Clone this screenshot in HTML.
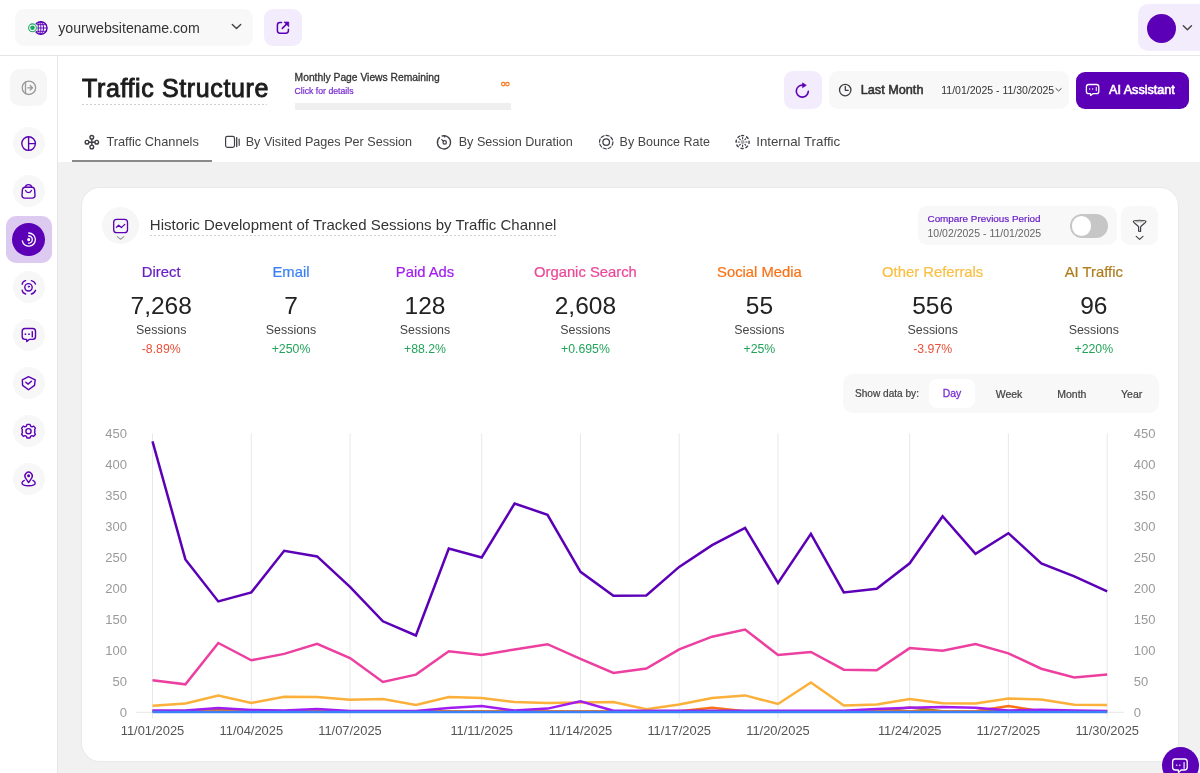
<!DOCTYPE html>
<html><head><meta charset="utf-8">
<style>
*{box-sizing:border-box;margin:0;padding:0}
html,body{width:1200px;height:773px;overflow:hidden;background:#fff}
body{position:relative;will-change:transform;font-family:"Liberation Sans",sans-serif;color:#333}
.a{position:absolute}
.t{position:absolute;line-height:1;white-space:nowrap}
.b{font-weight:bold}
.c{transform:translateX(-50%)}
.m{-webkit-text-stroke:0.22px currentColor}
</style></head><body>

<!-- top header -->
<div class="a" style="left:0;top:55px;width:1200px;height:1px;background:#e6e6e6"></div>
<div class="a" style="left:15px;top:9px;width:238px;height:37px;border-radius:9px;background:#f8f8f8"></div>
<div class="a" style="left:264px;top:9px;width:38px;height:37px;border-radius:9px;background:#f3ecfc"></div>
<div class="a" style="left:1138px;top:4px;width:70px;height:47px;border-radius:10px;background:#f3ecfc"></div>
<div class="a" style="left:1147px;top:14px;width:29px;height:29px;border-radius:50%;background:#5b00b6"></div>
<div class="t" style="left:58.3px;top:20.5px;font-size:14.15px;color:#333">yourwebsitename.com</div>

<!-- sidebar -->
<div class="a" style="left:57px;top:56px;width:1px;height:717px;background:#e6e6e6"></div>
<div class="a" style="left:10px;top:69px;width:37px;height:37px;border-radius:10px;background:#f6f6f6"></div>
<div class="a" style="left:12.5px;top:127px;width:32px;height:32px;border-radius:50%;background:#f7f7f7"></div>
<div class="a" style="left:12.5px;top:175px;width:32px;height:32px;border-radius:50%;background:#f7f7f7"></div>
<div class="a" style="left:6px;top:216px;width:46px;height:47px;border-radius:10px;background:#dccaf1"></div>
<div class="a" style="left:12px;top:223px;width:33px;height:33px;border-radius:50%;background:#5b00b6"></div>
<div class="a" style="left:12.5px;top:271px;width:32px;height:32px;border-radius:50%;background:#f7f7f7"></div>
<div class="a" style="left:12.5px;top:319px;width:32px;height:32px;border-radius:50%;background:#f7f7f7"></div>
<div class="a" style="left:12.5px;top:367px;width:32px;height:32px;border-radius:50%;background:#f7f7f7"></div>
<div class="a" style="left:12.5px;top:415px;width:32px;height:32px;border-radius:50%;background:#f7f7f7"></div>
<div class="a" style="left:12.5px;top:463px;width:32px;height:32px;border-radius:50%;background:#f7f7f7"></div>

<!-- page header -->
<div class="t" style="left:82px;top:76.4px;font-size:25px;letter-spacing:0.62px;color:#1c1c1c;-webkit-text-stroke:0.9px #1c1c1c">Traffic Structure</div>
<div class="a" style="left:82px;top:104px;width:185px;height:1px;background:repeating-linear-gradient(90deg,#cfcfcf 0 2px,transparent 2px 4px)"></div>
<div class="t" style="left:294.6px;top:72.9px;font-size:10.3px;color:#333;-webkit-text-stroke:0.3px #333">Monthly Page Views Remaining</div>
<div class="t m" style="left:294.6px;top:86.7px;font-size:8.7px;color:#7a2ed0">Click for details</div>
<div class="a" style="left:294.6px;top:103px;width:216px;height:6.5px;background:#efefef"></div>

<div class="a" style="left:784px;top:71px;width:38px;height:38px;border-radius:9px;background:#f3ecfc"></div>
<div class="a" style="left:828.5px;top:71px;width:240.5px;height:38px;border-radius:9px;background:#f8f8f8"></div>
<div class="t" style="left:860.7px;top:83.5px;font-size:12.7px;color:#333;-webkit-text-stroke:0.55px #333">Last Month</div>
<div class="t" style="left:941.3px;top:84.6px;font-size:10.5px;color:#333">11/01/2025 - 11/30/2025</div>
<div class="a" style="left:1076px;top:71.5px;width:112.5px;height:37.5px;border-radius:9px;background:#5b00b6"></div>
<div class="t" style="left:1109px;top:83.5px;font-size:12.6px;color:#fff;-webkit-text-stroke:0.6px #fff">AI Assistant</div>

<!-- tabs -->
<div class="t" style="left:106.4px;top:136.4px;font-size:12.8px;color:#444">Traffic Channels</div>
<div class="t" style="left:245.7px;top:136.4px;font-size:12.6px;color:#444">By Visited Pages Per Session</div>
<div class="t" style="left:458.7px;top:136.4px;font-size:12.6px;color:#444">By Session Duration</div>
<div class="t" style="left:619.6px;top:136.4px;font-size:12.5px;color:#444">By Bounce Rate</div>
<div class="t" style="left:756.2px;top:135px;font-size:13.3px;color:#444">Internal Traffic</div>
<div class="a" style="left:72px;top:159.5px;width:140px;height:2px;background:#8a8a8a"></div>

<!-- gray content -->
<div class="a" style="left:58px;top:161.5px;width:1142px;height:612px;background:#f1f1f1"></div>
<div class="a" style="left:82px;top:187.5px;width:1096px;height:573px;border-radius:18px;background:#fff;box-shadow:0 0 0 1px #e9e9e9"></div>

<!-- card header -->
<div class="a" style="left:102px;top:207px;width:37px;height:37px;border-radius:50%;background:#f6f6f6"></div>
<div class="t" style="left:149.8px;top:217px;font-size:15px;color:#333">Historic Development of Tracked Sessions by Traffic Channel</div>
<div class="a" style="left:149.8px;top:235px;width:406px;height:1px;background:repeating-linear-gradient(90deg,#cfcfcf 0 2px,transparent 2px 4px)"></div>

<div class="a" style="left:917.5px;top:206px;width:199.5px;height:38.5px;border-radius:9px;background:#f8f8f8"></div>
<div class="t" style="left:927.5px;top:213.6px;font-size:9.9px;color:#6d22c9;-webkit-text-stroke:0.2px #6d22c9">Compare Previous Period</div>
<div class="t" style="left:927.5px;top:227.6px;font-size:10.5px;color:#666">10/02/2025 - 11/01/2025</div>
<div class="a" style="left:1069.5px;top:214px;width:38px;height:23.5px;border-radius:12px;background:#c6c6c6"></div>
<div class="a" style="left:1071.5px;top:216px;width:19.5px;height:19.5px;border-radius:50%;background:#fff"></div>
<div class="a" style="left:1121px;top:206px;width:37px;height:38.5px;border-radius:9px;background:#f8f8f8"></div>

<!-- stats -->
<div class="t c m" style="left:161.2px;top:265.3px;font-size:14.8px;color:#6a1ec4">Direct</div>
<div class="t c" style="left:161.2px;top:293.7px;font-size:24.5px;color:#222">7,268</div>
<div class="t c" style="left:161.2px;top:323.6px;font-size:12.4px;color:#444">Sessions</div>
<div class="t c" style="left:161.2px;top:342.6px;font-size:12.3px;color:#e8503a">-8.89%</div>
<div class="t c m" style="left:291px;top:265.3px;font-size:14.8px;color:#3b82f6">Email</div>
<div class="t c" style="left:291px;top:293.7px;font-size:24.5px;color:#222">7</div>
<div class="t c" style="left:291px;top:323.6px;font-size:12.4px;color:#444">Sessions</div>
<div class="t c" style="left:291px;top:342.6px;font-size:12.3px;color:#22a35a">+250%</div>
<div class="t c m" style="left:425px;top:265.3px;font-size:14.8px;color:#a21cf0">Paid Ads</div>
<div class="t c" style="left:425px;top:293.7px;font-size:24.5px;color:#222">128</div>
<div class="t c" style="left:425px;top:323.6px;font-size:12.4px;color:#444">Sessions</div>
<div class="t c" style="left:425px;top:342.6px;font-size:12.3px;color:#22a35a">+88.2%</div>
<div class="t c m" style="left:585.4px;top:265.3px;font-size:14.8px;color:#ec4899">Organic Search</div>
<div class="t c" style="left:585.4px;top:293.7px;font-size:24.5px;color:#222">2,608</div>
<div class="t c" style="left:585.4px;top:323.6px;font-size:12.4px;color:#444">Sessions</div>
<div class="t c" style="left:585.4px;top:342.6px;font-size:12.3px;color:#22a35a">+0.695%</div>
<div class="t c m" style="left:759.4px;top:265.3px;font-size:14.8px;color:#f97316">Social Media</div>
<div class="t c" style="left:759.4px;top:293.7px;font-size:24.5px;color:#222">55</div>
<div class="t c" style="left:759.4px;top:323.6px;font-size:12.4px;color:#444">Sessions</div>
<div class="t c" style="left:759.4px;top:342.6px;font-size:12.3px;color:#22a35a">+25%</div>
<div class="t c m" style="left:932.7px;top:265.3px;font-size:14.8px;color:#fbbf44">Other Referrals</div>
<div class="t c" style="left:932.7px;top:293.7px;font-size:24.5px;color:#222">556</div>
<div class="t c" style="left:932.7px;top:323.6px;font-size:12.4px;color:#444">Sessions</div>
<div class="t c" style="left:932.7px;top:342.6px;font-size:12.3px;color:#e8503a">-3.97%</div>
<div class="t c m" style="left:1093.8px;top:265.3px;font-size:14.8px;color:#b07d1e">AI Traffic</div>
<div class="t c" style="left:1093.8px;top:293.7px;font-size:24.5px;color:#222">96</div>
<div class="t c" style="left:1093.8px;top:323.6px;font-size:12.4px;color:#444">Sessions</div>
<div class="t c" style="left:1093.8px;top:342.6px;font-size:12.3px;color:#22a35a">+220%</div>

<!-- show data by -->
<div class="a" style="left:842.7px;top:374.2px;width:316px;height:38.6px;border-radius:10px;background:#f8f8f8"></div>
<div class="a" style="left:929px;top:378.8px;width:46px;height:29.4px;border-radius:8px;background:#fff"></div>
<div class="t m" style="left:855px;top:388.9px;font-size:10.1px;color:#444">Show data by:</div>
<div class="t c" style="left:952px;top:389.2px;font-size:10.4px;color:#7a2ed0;-webkit-text-stroke:0.3px #7a2ed0">Day</div>
<div class="t c m" style="left:1009px;top:388.6px;font-size:10.5px;color:#444">Week</div>
<div class="t c m" style="left:1071.8px;top:388.6px;font-size:10.5px;color:#444">Month</div>
<div class="t c m" style="left:1131.7px;top:388.6px;font-size:10.5px;color:#444">Year</div>

<!-- chart -->
<svg class="a" style="left:0;top:0;font-family:'Liberation Sans',sans-serif" width="1200" height="773" viewBox="0 0 1200 773">
<line x1="152.5" y1="433.5" x2="152.5" y2="718.5" stroke="#e8e8e8" stroke-width="1"/>
<line x1="251.3" y1="433.5" x2="251.3" y2="718.5" stroke="#e8e8e8" stroke-width="1"/>
<line x1="350.0" y1="433.5" x2="350.0" y2="718.5" stroke="#e8e8e8" stroke-width="1"/>
<line x1="481.7" y1="433.5" x2="481.7" y2="718.5" stroke="#e8e8e8" stroke-width="1"/>
<line x1="580.5" y1="433.5" x2="580.5" y2="718.5" stroke="#e8e8e8" stroke-width="1"/>
<line x1="679.2" y1="433.5" x2="679.2" y2="718.5" stroke="#e8e8e8" stroke-width="1"/>
<line x1="778.0" y1="433.5" x2="778.0" y2="718.5" stroke="#e8e8e8" stroke-width="1"/>
<line x1="909.7" y1="433.5" x2="909.7" y2="718.5" stroke="#e8e8e8" stroke-width="1"/>
<line x1="1008.4" y1="433.5" x2="1008.4" y2="718.5" stroke="#e8e8e8" stroke-width="1"/>
<line x1="1107.2" y1="433.5" x2="1107.2" y2="718.5" stroke="#e8e8e8" stroke-width="1"/>
<line x1="136" y1="712.3" x2="1124" y2="712.3" stroke="#e6e6e6" stroke-width="1"/>
<polyline points="152.5,441.3 185.4,559.4 218.3,601.4 251.3,592.4 284.2,550.8 317.1,556.4 350.0,586.8 382.9,621.3 415.9,635.5 448.8,548.5 481.7,557.5 514.6,503.5 547.5,514.8 580.5,571.8 613.4,595.8 646.3,595.4 679.2,566.9 712.1,545.2 745.1,527.9 778.0,583.0 810.9,533.9 843.8,592.4 876.7,588.8 909.7,563.3 942.6,516.3 975.5,553.9 1008.4,533.2 1041.3,563.3 1074.3,576.4 1107.2,591.4" fill="none" stroke="#5b00b6" stroke-width="2.5" stroke-linejoin="miter"/>
<polyline points="152.5,680.2 185.4,684.3 218.3,643.0 251.3,660.3 284.2,653.9 317.1,643.8 350.0,658.0 382.9,682.0 415.9,674.6 448.8,651.3 481.7,655.0 514.6,649.4 547.5,644.2 580.5,658.8 613.4,673.0 646.3,668.6 679.2,649.4 712.1,636.7 745.1,629.5 778.0,655.0 810.9,652.0 843.8,669.7 876.7,670.2 909.7,648.1 942.6,650.7 975.5,644.0 1008.4,653.4 1041.3,668.7 1074.3,677.4 1107.2,674.4" fill="none" stroke="#ec3fa0" stroke-width="2.5" stroke-linejoin="miter"/>
<polyline points="152.5,705.7 185.4,703.4 218.3,695.6 251.3,703.0 284.2,696.7 317.1,697.0 350.0,699.7 382.9,699.0 415.9,705.0 448.8,697.0 481.7,698.0 514.6,702.0 547.5,703.0 580.5,702.6 613.4,702.0 646.3,709.3 679.2,704.6 712.1,698.0 745.1,695.4 778.0,704.0 810.9,682.4 843.8,705.4 876.7,704.4 909.7,699.1 942.6,703.3 975.5,703.6 1008.4,698.4 1041.3,699.5 1074.3,704.8 1107.2,705.1" fill="none" stroke="#fbb03b" stroke-width="2.5" stroke-linejoin="miter"/>
<polyline points="152.5,711.2 185.4,711.2 218.3,709.0 251.3,711.2 284.2,711.2 317.1,711.2 350.0,711.2 382.9,711.2 415.9,711.2 448.8,711.2 481.7,711.2 514.6,711.2 547.5,711.2 580.5,711.2 613.4,711.2 646.3,711.2 679.2,711.2 712.1,711.2 745.1,711.2 778.0,711.2 810.9,711.2 843.8,711.2 876.7,711.2 909.7,707.5 942.6,711.2 975.5,711.2 1008.4,711.2 1041.3,711.2 1074.3,711.2 1107.2,711.2" fill="none" stroke="#b07d1e" stroke-width="2.5" stroke-linejoin="miter"/>
<polyline points="152.5,711.2 185.4,711.2 218.3,711.2 251.3,711.2 284.2,711.2 317.1,711.2 350.0,711.2 382.9,711.2 415.9,711.2 448.8,711.2 481.7,711.2 514.6,711.2 547.5,711.2 580.5,711.2 613.4,711.2 646.3,711.2 679.2,711.2 712.1,707.7 745.1,711.2 778.0,711.2 810.9,711.2 843.8,711.2 876.7,711.2 909.7,711.2 942.6,711.2 975.5,711.2 1008.4,706.0 1041.3,711.2 1074.3,711.2 1107.2,711.2" fill="none" stroke="#f97316" stroke-width="2.5" stroke-linejoin="miter"/>
<polyline points="152.5,710.5 185.4,710.6 218.3,708.0 251.3,710.0 284.2,710.4 317.1,709.0 350.0,710.9 382.9,710.9 415.9,710.9 448.8,708.0 481.7,706.0 514.6,710.6 547.5,708.6 580.5,701.4 613.4,710.8 646.3,710.8 679.2,710.8 712.1,710.8 745.1,710.8 778.0,710.8 810.9,710.8 843.8,710.8 876.7,709.0 909.7,707.7 942.6,707.0 975.5,707.7 1008.4,710.4 1041.3,709.7 1074.3,710.6 1107.2,710.9" fill="none" stroke="#a21cf0" stroke-width="2.5" stroke-linejoin="miter"/>
<polyline points="152.5,711.9 185.4,711.9 218.3,711.9 251.3,711.9 284.2,711.9 317.1,711.9 350.0,711.9 382.9,711.9 415.9,711.9 448.8,711.9 481.7,711.9 514.6,711.9 547.5,711.9 580.5,711.9 613.4,711.9 646.3,711.9 679.2,711.9 712.1,711.9 745.1,711.9 778.0,711.9 810.9,711.9 843.8,711.9 876.7,711.9 909.7,711.9 942.6,711.9 975.5,711.9 1008.4,711.9 1041.3,711.9 1074.3,711.9 1107.2,711.9" fill="none" stroke="#3b82f6" stroke-width="2.5" stroke-linejoin="miter"/>
<text x="127" y="717.0" text-anchor="end" font-size="13" fill="#9a9a9a">0</text>
<text x="1133.7" y="717.0" font-size="13" fill="#9a9a9a">0</text>
<text x="127" y="686.0" text-anchor="end" font-size="13" fill="#9a9a9a">50</text>
<text x="1133.7" y="686.0" font-size="13" fill="#9a9a9a">50</text>
<text x="127" y="655.1" text-anchor="end" font-size="13" fill="#9a9a9a">100</text>
<text x="1133.7" y="655.1" font-size="13" fill="#9a9a9a">100</text>
<text x="127" y="624.1" text-anchor="end" font-size="13" fill="#9a9a9a">150</text>
<text x="1133.7" y="624.1" font-size="13" fill="#9a9a9a">150</text>
<text x="127" y="593.2" text-anchor="end" font-size="13" fill="#9a9a9a">200</text>
<text x="1133.7" y="593.2" font-size="13" fill="#9a9a9a">200</text>
<text x="127" y="562.2" text-anchor="end" font-size="13" fill="#9a9a9a">250</text>
<text x="1133.7" y="562.2" font-size="13" fill="#9a9a9a">250</text>
<text x="127" y="531.3" text-anchor="end" font-size="13" fill="#9a9a9a">300</text>
<text x="1133.7" y="531.3" font-size="13" fill="#9a9a9a">300</text>
<text x="127" y="500.3" text-anchor="end" font-size="13" fill="#9a9a9a">350</text>
<text x="1133.7" y="500.3" font-size="13" fill="#9a9a9a">350</text>
<text x="127" y="469.4" text-anchor="end" font-size="13" fill="#9a9a9a">400</text>
<text x="1133.7" y="469.4" font-size="13" fill="#9a9a9a">400</text>
<text x="127" y="438.4" text-anchor="end" font-size="13" fill="#9a9a9a">450</text>
<text x="1133.7" y="438.4" font-size="13" fill="#9a9a9a">450</text>
<text x="152.5" y="734.8" text-anchor="middle" font-size="12.9" fill="#555">11/01/2025</text>
<text x="251.3" y="734.8" text-anchor="middle" font-size="12.9" fill="#555">11/04/2025</text>
<text x="350.0" y="734.8" text-anchor="middle" font-size="12.9" fill="#555">11/07/2025</text>
<text x="481.7" y="734.8" text-anchor="middle" font-size="12.9" fill="#555">11/11/2025</text>
<text x="580.5" y="734.8" text-anchor="middle" font-size="12.9" fill="#555">11/14/2025</text>
<text x="679.2" y="734.8" text-anchor="middle" font-size="12.9" fill="#555">11/17/2025</text>
<text x="778.0" y="734.8" text-anchor="middle" font-size="12.9" fill="#555">11/20/2025</text>
<text x="909.7" y="734.8" text-anchor="middle" font-size="12.9" fill="#555">11/24/2025</text>
<text x="1008.4" y="734.8" text-anchor="middle" font-size="12.9" fill="#555">11/27/2025</text>
<text x="1107.2" y="734.8" text-anchor="middle" font-size="12.9" fill="#555">11/30/2025</text>
</svg>

<!-- chat bubble -->
<div class="a" style="left:1161.5px;top:746.5px;width:37.5px;height:37.5px;border-radius:50%;background:#5b00b6"></div>

<svg class="a" style="left:0;top:0" width="1200" height="773" viewBox="0 0 1200 773" fill="none" stroke-linecap="round" stroke-linejoin="round">
<!-- globe + green dot -->
<circle cx="40.8" cy="28" r="6.2" stroke="#5b00b6" stroke-width="1.4"/>
<ellipse cx="40.8" cy="28" rx="2.7" ry="6.2" stroke="#5b00b6" stroke-width="1"/>
<path d="M34.6 28H47M35.4 24.7H46.2M35.4 31.3H46.2M40.8 21.8V34.2" stroke="#5b00b6" stroke-width="0.9"/>
<circle cx="32.5" cy="27.8" r="4.9" fill="#fff"/>
<circle cx="32.5" cy="27.8" r="3.9" stroke="#1aa760" stroke-width="1.1"/>
<circle cx="32.5" cy="27.8" r="2.3" fill="#1aa760"/>
<!-- selector chevron -->
<path d="M232.3 24.5L236.5 28.6L240.7 24.5" stroke="#444" stroke-width="1.4"/>
<!-- open external -->
<path d="M281.5 22.4H280a2.6 2.6 0 0 0-2.6 2.6V30.6a2.6 2.6 0 0 0 2.6 2.6H285.8a2.6 2.6 0 0 0 2.6-2.6V29.2" stroke="#5b00b6" stroke-width="1.5"/>
<path d="M282.3 28.4L287.6 23.1" stroke="#5b00b6" stroke-width="1.5"/>
<path d="M284.4 22.1H288.7V26.4Z" fill="#5b00b6" stroke="#5b00b6" stroke-width="0.8"/>
<!-- avatar chevron -->
<path d="M1183.3 25.8L1187.4 29.8L1191.5 25.8" stroke="#444" stroke-width="1.4"/>

<!-- sidebar collapse -->
<circle cx="28.9" cy="87.8" r="6.7" stroke="#999" stroke-width="1.3"/>
<path d="M25.5 81.8V93.8" stroke="#999" stroke-width="1.3"/>
<path d="M27.8 87.8H32.3M30.2 85.5L32.5 87.8L30.2 90.1" stroke="#999" stroke-width="1.3"/>
<!-- pie -->
<circle cx="28.6" cy="143.6" r="6.8" stroke="#5b00b6" stroke-width="1.4"/>
<path d="M28.6 136.8V150.4M28.6 143.6H35.4" stroke="#5b00b6" stroke-width="1.4"/>
<!-- bag -->
<g transform="translate(18 181)" stroke="#5b00b6" stroke-width="1.4">
<path d="M7.3 6.2C7.6 4.4 8.8 3.6 10.5 3.6C12.2 3.6 13.4 4.4 13.7 6.2"/>
<path d="M7 6.2H14C15.5 6.2 16.3 7.2 16.6 8.6L17 14.2C17.1 15.9 16 17.1 14.4 17.1H6.6C5 17.1 3.9 15.9 4 14.2L4.4 8.6C4.7 7.2 5.5 6.2 7 6.2Z"/>
<path d="M7.5 9.4C8 10.9 9 11.6 10.5 11.6C12 11.6 13 10.9 13.5 9.4" stroke-width="1.3"/>
</g>
<!-- active spiral -->
<g transform="translate(28.7 239.6)" stroke="#fff" stroke-width="1.3">
<circle cx="0" cy="0" r="0.9" fill="#fff"/>
<path d="M0 -3.6A3.6 3.6 0 0 1 0 3.6"/>
<path d="M0 -6.6A6.6 6.6 0 1 1 -6.4 1.2"/>
</g>
<!-- scan -->
<g transform="translate(18 277)" stroke="#5b00b6" stroke-width="1.4">
<path d="M4.2 7.3C4.4 5.3 5.6 4 7.6 3.6"/>
<path d="M13.4 3.6C15.4 4 16.8 5.3 17.5 7.1"/>
<path d="M4.2 13.3C4.4 15.3 5.6 16.6 7.6 17"/>
<path d="M13.4 17C15.4 16.6 16.8 15.3 17.5 13.3"/>
<circle cx="10.5" cy="10.3" r="3.7"/>
<circle cx="10.9" cy="9.6" r="0.7" fill="#5b00b6" stroke-width="0.8"/>
</g>
<!-- chat -->
<g transform="translate(18 325)" stroke="#5b00b6" stroke-width="1.4">
<path d="M7 3.5H14.7C16.3 3.5 17.5 4.7 17.5 6.3V11.6C17.5 13.2 16.3 14.4 14.7 14.4H11.2L8.8 16.6L8.6 14.4H7C5.4 14.4 4.2 13.2 4.2 11.6V6.3C4.2 4.7 5.4 3.5 7 3.5Z"/>
<path d="M7.4 9.2H7.5M11 9.2H11.1" stroke-width="1.7"/>
<path d="M14.3 6.6V11.7"/>
</g>
<!-- shield -->
<g transform="translate(18 373)" stroke="#5b00b6" stroke-width="1.4">
<path d="M10.5 3.6L17.2 6.8L16.5 12.4L10.5 16.7L4.6 12.4L4.3 6.8Z"/>
<path d="M7.8 9.3L10.1 11.1L13.5 8.3"/>
</g>
<!-- gear -->
<g transform="translate(28.5 431.2)" stroke="#5b00b6" stroke-width="1.4">
<circle cx="0" cy="0" r="2.6"/>
<path d="M-1.5 -6.8H1.5L2.1 -5.1L3.5 -4.4L5.2 -5.1L6.9 -3.1L6.1 -1.5L6.4 0L6.1 1.5L6.9 3.1L5.2 5.1L3.5 4.4L2.1 5.1L1.5 6.8H-1.5L-2.1 5.1L-3.5 4.4L-5.2 5.1L-6.9 3.1L-6.1 1.5L-6.4 0L-6.1 -1.5L-6.9 -3.1L-5.2 -5.1L-3.5 -4.4L-2.1 -5.1Z"/>
</g>
<!-- pin -->
<g transform="translate(18 469)" stroke="#5b00b6" stroke-width="1.4">
<path d="M10.6 13.6L7.6 9.2C6.6 7.6 6.8 5.4 8.1 4.2C9.5 2.9 11.7 2.9 13.1 4.2C14.4 5.4 14.6 7.6 13.6 9.2Z"/>
<circle cx="10.6" cy="6.8" r="0.8" fill="#5b00b6"/>
<path d="M6.3 11.4C4.8 12.1 4 13 4 14C4 15.6 7 16.7 10.6 16.7C14.2 16.7 17.2 15.6 17.2 14C17.2 13 16.4 12.1 14.9 11.4"/>
</g>

<!-- tab icons -->
<g stroke="#3f3f46" stroke-width="1.2">
<g stroke-width="1.4"><circle cx="91.8" cy="137.3" r="1.85"/><circle cx="91.8" cy="147" r="1.85"/>
<circle cx="87" cy="142.2" r="1.85"/><circle cx="96.7" cy="142.2" r="1.85"/>
<path d="M91.8 139.2V145.1M88.9 142.2H94.8"/></g>
<rect x="225.6" y="136.3" width="8.9" height="11" rx="1.8"/>
<path d="M236.7 137.6V146.6" stroke-width="1.3"/>
<path d="M239.2 139.3V145.2" stroke-width="1.5" stroke="#666"/>
<path d="M442.2 136A6.6 6.6 0 1 1 439.5 137.5" stroke-width="1.3"/>
<circle cx="444.7" cy="142.4" r="1.7" stroke-width="1.2"/>
<path d="M443.3 141L441.8 139.6M444.7 135.8V137"/>
<circle cx="606.2" cy="142.1" r="3.3" stroke-width="1.3"/>
<circle cx="606.2" cy="142.1" r="6.7" stroke-width="1.2" stroke-dasharray="3.2 2"/>
<g transform="translate(742.6 142)">
<circle cx="0" cy="0" r="6.5" stroke-width="1.4" stroke-dasharray="2.1 3.0" transform="rotate(-99)"/>
<path d="M0 -4.4V-3.2M0 3.2V4.4M-4.4 0H-3.2M3.2 0H4.4M-3.1 -3.1L-2.3 -2.3M2.3 2.3L3.1 3.1M-3.1 3.1L-2.3 2.3M2.3 -2.3L3.1 -3.1" stroke-width="1.2"/>
<circle cx="0" cy="0" r="1.9" fill="#a8a8a8" stroke="none"/>
</g>
</g>

<!-- refresh -->
<path d="M808.3 91.4A6 6 0 1 1 803 85.2" stroke="#5b00b6" stroke-width="1.6"/>
<path d="M802.8 83.1L806.3 85.3L802.8 87.5Z" fill="#5b00b6" stroke="#5b00b6" stroke-width="0.7"/>
<!-- clock -->
<circle cx="845.2" cy="90.1" r="5.7" stroke="#3f3f46" stroke-width="1.3"/>
<path d="M845.3 86.5V90.3H848.3" stroke="#3f3f46" stroke-width="1.3"/>
<!-- date chevron -->
<path d="M1056 88.6L1058.6 91L1061.2 88.6" stroke="#444" stroke-width="1"/>
<!-- AI chat -->
<path d="M1088.7 84.5H1096.5C1097.8 84.5 1098.8 85.5 1098.8 86.8V91.4C1098.8 92.7 1097.8 93.7 1096.5 93.7H1093L1090.6 95.4L1090.5 93.7H1088.7C1087.4 93.7 1086.4 92.7 1086.4 91.4V86.8C1086.4 85.5 1087.4 84.5 1088.7 84.5Z" stroke="#fff" stroke-width="1.3"/>
<path d="M1089.6 89.1H1089.7M1092.6 89.1H1092.7" stroke="#e8d8ff" stroke-width="1.5"/>
<path d="M1096.3 87.4V90.6" stroke="#e8d8ff" stroke-width="1.2"/>

<!-- chart icon -->
<rect x="113.7" y="219.3" width="13.8" height="13.4" rx="3" stroke="#5b00b6" stroke-width="1.3"/>
<path d="M116.4 227.4L118.6 225.2L121.4 227.6L124.8 224.4" stroke="#5b00b6" stroke-width="1.3"/>
<path d="M117.3 236.6L120.6 239.3L123.9 236.6" stroke="#999" stroke-width="1.1"/>
<!-- filter -->
<path d="M1133.3 221.5C1133.3 219.8 1146 219.8 1146 221.5C1146 222.8 1141 225.5 1140.6 227V231.4L1138.6 231.2V227C1138.2 225.5 1133.3 222.8 1133.3 221.5Z" stroke="#3f3f46" stroke-width="1.2"/>
<path d="M1135.8 221.8H1143.4" stroke="#999" stroke-width="0.9"/>
<path d="M1136.2 236.3L1139.6 239.4L1143 236.3" stroke="#3f3f46" stroke-width="1.1"/>

<!-- infinity -->
<circle cx="503.3" cy="84.1" r="1.75" stroke="#f97316" stroke-width="1.1"/>
<circle cx="507.4" cy="84.1" r="1.75" stroke="#f97316" stroke-width="1.1"/>

<!-- chat bubble icon -->
<path d="M1175.3 759H1184.5C1186 759 1187.2 760.2 1187.2 761.7V767.3C1187.2 768.8 1186 770 1184.5 770H1181L1178.5 772.5L1178.3 770H1175.3C1173.8 770 1172.6 768.8 1172.6 767.3V761.7C1172.6 760.2 1173.8 759 1175.3 759Z" stroke="#fff" stroke-width="1.3"/>
<path d="M1176.6 765.2H1176.7M1179.7 765.2H1179.8" stroke="#e8d8ff" stroke-width="1.6"/>
<path d="M1184.1 762.6V768.3" stroke="#e8d8ff" stroke-width="1.3"/>
</svg>

</body></html>
